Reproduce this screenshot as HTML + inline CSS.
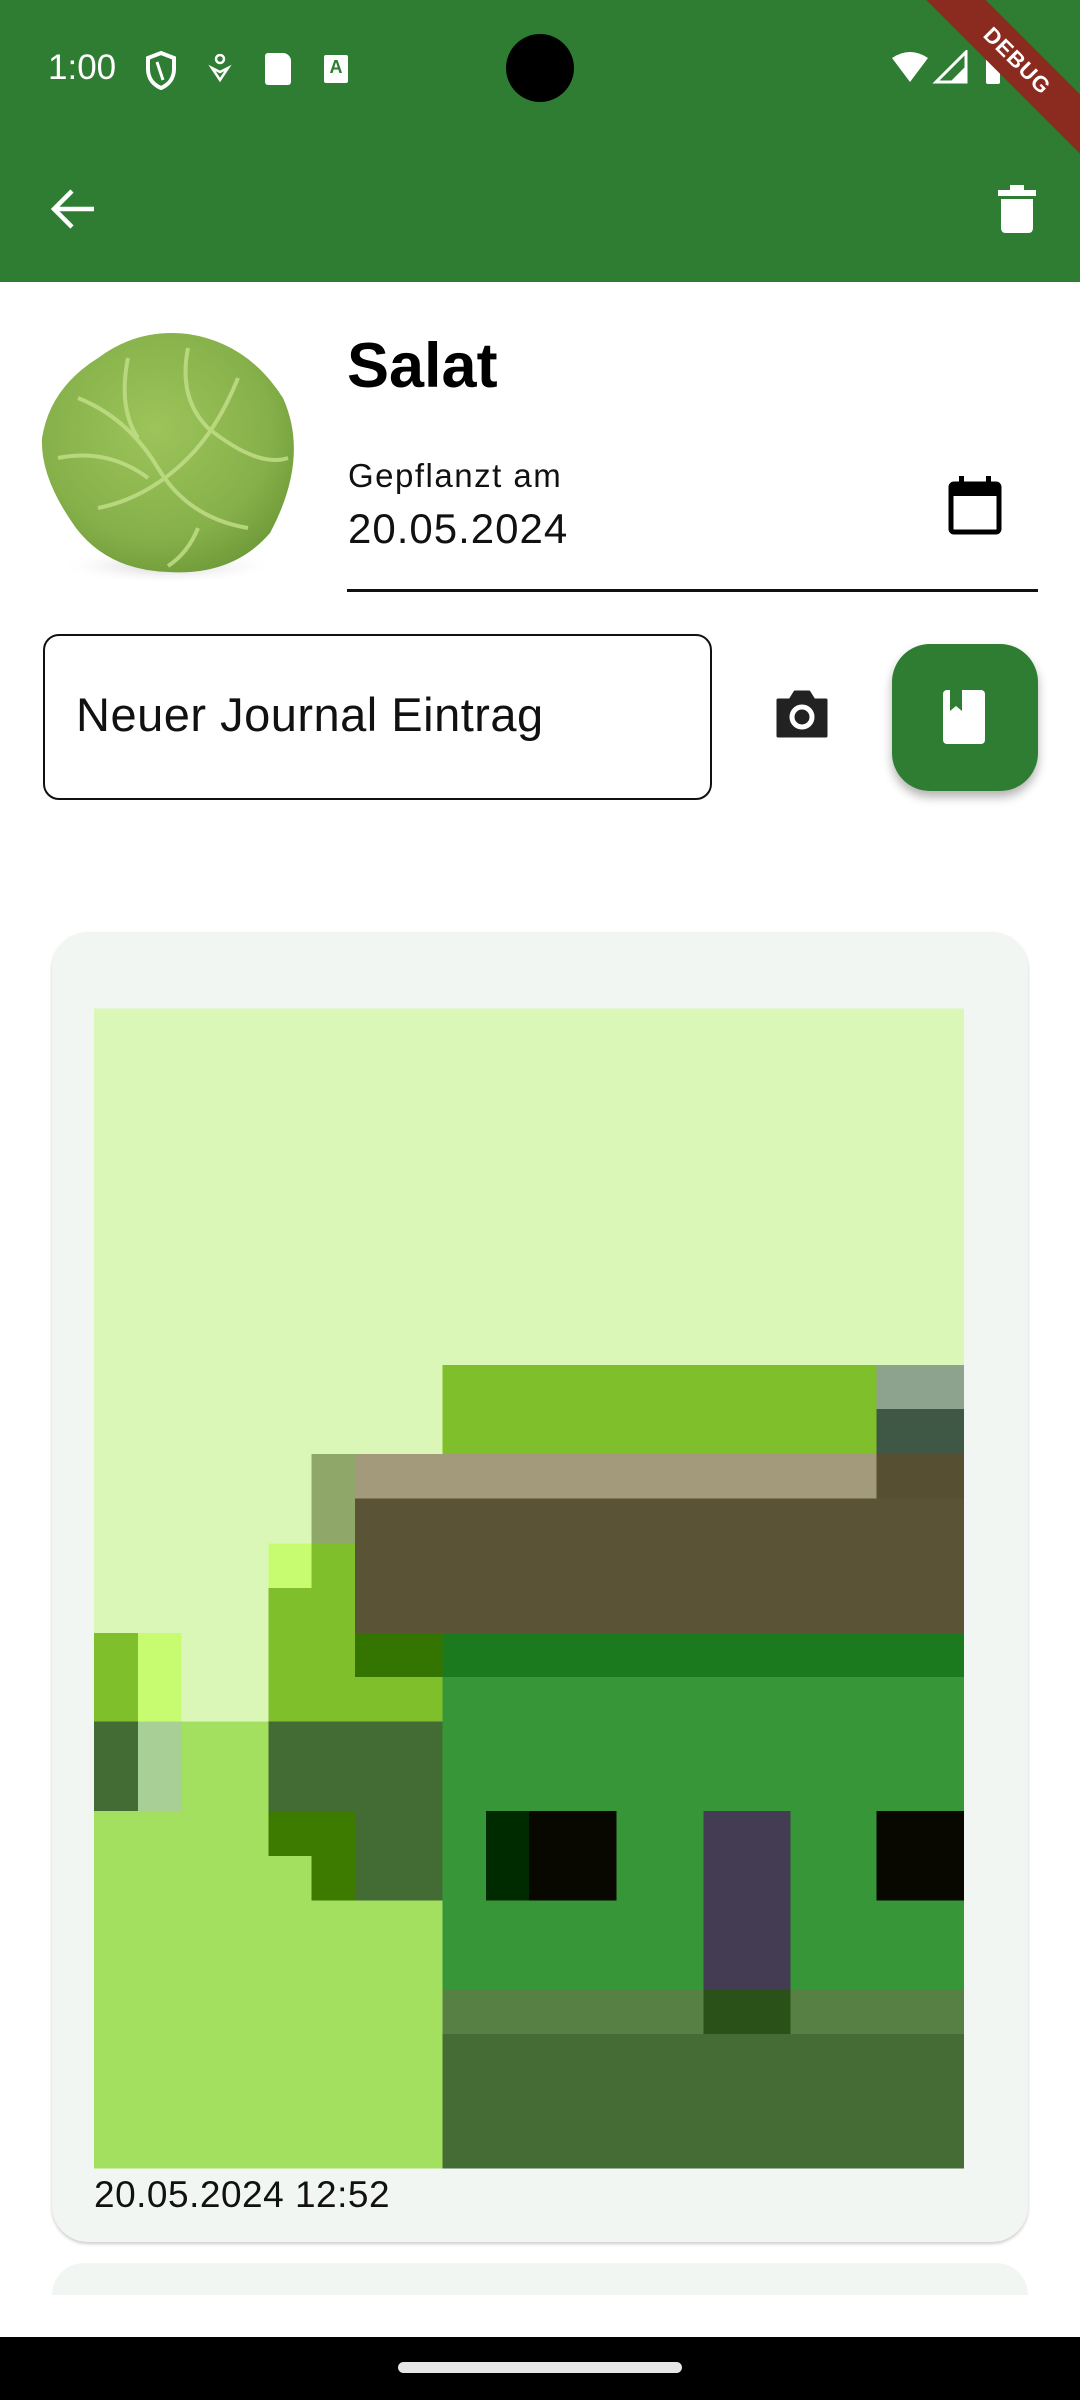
<!DOCTYPE html>
<html><head><meta charset="utf-8"><style>
*{margin:0;padding:0;box-sizing:border-box}
body{width:1080px;height:2400px;overflow:hidden;background:#fff;position:relative;font-family:"Liberation Sans",sans-serif}
.abs{position:absolute}
</style></head><body>
<div class="abs" style="left:0;top:0;width:1080px;height:282px;background:#2E7D32"></div>
<div class="abs" style="left:48px;top:48px;color:#fff;font-size:35px;">1:00</div>
<svg class="abs" style="left:144px;top:50px" width="34" height="40" viewBox="0 0 34 40"><path d="M17 3 L30 8 V19 C30 29 24 35 17 38 C10 35 4 29 4 19 V8 Z" fill="none" stroke="#fff" stroke-width="4"/><path d="M13 12 L19 30" stroke="#fff" stroke-width="3"/></svg>
<svg class="abs" style="left:208px;top:54px" width="24" height="30" viewBox="0 0 24 30"><circle cx="12" cy="5" r="4" fill="none" stroke="#fff" stroke-width="2.5"/><path d="M4 14 L12 26 L20 14 L12 18 Z" fill="none" stroke="#fff" stroke-width="2.5"/></svg>
<div class="abs" style="left:265px;top:53px;width:26px;height:32px;background:#fff;border-radius:3px 8px 3px 3px"></div>
<div class="abs" style="left:324px;top:55px;width:24px;height:28px;background:#fff;border-radius:2px;color:#2E7D32;font-size:18px;font-weight:bold;text-align:center;line-height:24px">A</div>
<div class="abs" style="left:506px;top:34px;width:68px;height:68px;border-radius:50%;background:#000"></div>
<svg class="abs" style="left:890px;top:50px" width="110" height="36" viewBox="0 0 110 36"><path d="M2 8 Q20 -4 38 8 L20 32 Z" fill="#fff"/><path d="M46 32 L76 32 L76 2 Z" fill="none" stroke="#fff" stroke-width="3"/><path d="M60 32 L76 32 L76 16 Z" fill="#fff"/><rect x="96" y="4" width="14" height="30" rx="2" fill="#fff"/></svg>
<div class="abs" style="left:887px;top:40px;width:260px;height:42px;background:#8B2A1E;transform:rotate(45deg);transform-origin:50% 50%;color:#fff;font-weight:bold;font-size:22px;text-align:center;line-height:42px;letter-spacing:1px">DEBUG</div>
<svg class="abs" style="left:48px;top:186px" width="50" height="46" viewBox="0 0 50 46"><path d="M46 23 H6 M24 5 L6 23 L24 41" fill="none" stroke="#fff" stroke-width="4.5"/></svg>
<svg class="abs" style="left:998px;top:184px" width="38" height="50" viewBox="0 0 38 50"><rect x="0" y="6" width="38" height="6" fill="#fff"/><rect x="12" y="1" width="14" height="6" fill="#fff"/><path d="M3 15 H35 V44 Q35 49 30 49 H8 Q3 49 3 44 Z" fill="#fff"/></svg>

<svg class="abs" style="left:38px;top:328px" width="270" height="255" viewBox="0 0 270 255" preserveAspectRatio="none">
<defs><radialGradient id="g" cx="0.45" cy="0.4" r="0.65"><stop offset="0" stop-color="#9CC45A"/><stop offset="0.7" stop-color="#86B04A"/><stop offset="1" stop-color="#6E9A38"/></radialGradient>
<radialGradient id="s" cx="0.5" cy="0.5" r="0.5"><stop offset="0" stop-color="#ccc"/><stop offset="1" stop-color="#fff" stop-opacity="0"/></radialGradient></defs>
<ellipse cx="130" cy="238" rx="110" ry="18" fill="url(#s)"/>
<path d="M60 30 Q100 0 150 6 Q210 15 245 70 Q272 130 232 205 Q195 248 130 244 Q70 242 38 200 Q2 150 4 110 Q12 60 60 30 Z" fill="url(#g)"/>
<g stroke="#C4E08A" stroke-width="4" fill="none" opacity="0.8">
<path d="M40 70 Q90 90 120 140 Q150 190 210 200"/><path d="M200 50 Q180 100 150 130 Q110 170 60 180"/><path d="M20 130 Q70 120 110 150"/><path d="M150 20 Q140 70 170 100 Q220 140 250 130"/><path d="M90 30 Q80 80 100 110"/><path d="M160 200 Q150 225 130 238"/></g>
</svg>

<div class="abs" style="left:347px;top:330px;font-size:63px;font-weight:bold;color:#000">Salat</div>
<div class="abs" style="left:348px;top:457px;font-size:33px;letter-spacing:1.5px;color:#111">Gepflanzt am</div>
<div class="abs" style="left:348px;top:505px;font-size:42px;letter-spacing:1px;color:#111">20.05.2024</div>
<svg class="abs" style="left:947px;top:474px" width="56" height="62" viewBox="0 0 56 62"><rect x="4" y="10" width="48" height="48" rx="3" fill="none" stroke="#000" stroke-width="5"/><rect x="4" y="10" width="48" height="12" fill="#000"/><rect x="12" y="2" width="5" height="12" fill="#000"/><rect x="39" y="2" width="5" height="12" fill="#000"/></svg>
<div class="abs" style="left:347px;top:589px;width:691px;height:3px;background:#111"></div>

<div class="abs" style="left:43px;top:634px;width:669px;height:166px;border:2px solid #111;border-radius:16px"></div>
<div class="abs" style="left:76px;top:687px;font-size:47px;letter-spacing:0.5px;color:#111">Neuer Journal Eintrag</div>
<svg class="abs" style="left:774px;top:688px" width="56" height="52" viewBox="0 0 56 52"><path d="M4 12 H16 L21 4 H35 L40 12 H52 V48 H4 Z" fill="#222" stroke="#222" stroke-width="3" stroke-linejoin="round"/><circle cx="28" cy="29" r="10" fill="none" stroke="#fff" stroke-width="5"/></svg>
<div class="abs" style="left:892px;top:644px;width:146px;height:147px;border-radius:38px;background:#2E7D32;box-shadow:0 6px 10px rgba(0,0,0,0.3)"></div>
<svg class="abs" style="left:942px;top:689px" width="44" height="56" viewBox="0 0 44 56"><rect x="1" y="1" width="42" height="54" rx="4" fill="#fff"/><path d="M8 1 V22 L14 17 L20 22 V1 Z" fill="#2E7D32"/></svg>

<div class="abs" style="left:52px;top:932px;width:976px;height:1310px;background:#F2F6F2;border-radius:36px;box-shadow:0 2px 3px rgba(0,0,0,0.2)"></div>
<svg class="abs" style="left:40px;top:900px" width="1000" height="1300" viewBox="0 0 1568 1568" preserveAspectRatio="none" shape-rendering="crispEdges">
<rect x="85" y="131" width="1364" height="1399" fill="#DBF7B8"/>
<rect x="631" y="561" width="681" height="107" fill="#7FBF2C"/>
<rect x="1312" y="561" width="137" height="53" fill="#8DA38D"/>
<rect x="1312" y="614" width="137" height="54" fill="#3E5845"/>
<rect x="426" y="668" width="68" height="108" fill="#8FA86A"/>
<rect x="494" y="668" width="818" height="54" fill="#A29A7A"/>
<rect x="1312" y="668" width="137" height="54" fill="#574F32"/>
<rect x="494" y="722" width="955" height="162" fill="#5A5335"/>
<rect x="358" y="776" width="68" height="54" fill="#C8FC70"/>
<rect x="426" y="776" width="68" height="108" fill="#7FBF2C"/>
<rect x="358" y="830" width="136" height="161" fill="#7FBF2C"/>
<rect x="494" y="937" width="137" height="54" fill="#7FBF2C"/>
<rect x="494" y="884" width="137" height="53" fill="#347400"/>
<rect x="631" y="884" width="818" height="53" fill="#1B7A1E"/>
<rect x="631" y="937" width="818" height="378" fill="#379637"/>
<rect x="85" y="884" width="69" height="107" fill="#7FBF2C"/>
<rect x="154" y="884" width="68" height="107" fill="#C8FC70"/>
<rect x="85" y="991" width="69" height="108" fill="#436C34"/>
<rect x="154" y="991" width="68" height="108" fill="#A8D096"/>
<rect x="222" y="991" width="136" height="108" fill="#A3E060"/>
<rect x="358" y="991" width="273" height="108" fill="#436C34"/>
<rect x="85" y="1099" width="546" height="431" fill="#A3E060"/>
<rect x="358" y="1099" width="136" height="54" fill="#3D7A00"/>
<rect x="426" y="1153" width="68" height="54" fill="#3D7A00"/>
<rect x="494" y="1099" width="137" height="108" fill="#436C34"/>
<rect x="699" y="1099" width="68" height="108" fill="#002A00"/>
<rect x="767" y="1099" width="137" height="108" fill="#080800"/>
<rect x="1040" y="1099" width="137" height="216" fill="#433C52"/>
<rect x="1312" y="1099" width="137" height="108" fill="#080800"/>
<rect x="631" y="1315" width="818" height="53" fill="#578045"/>
<rect x="1040" y="1315" width="137" height="53" fill="#2A5218"/>
<rect x="631" y="1368" width="818" height="162" fill="#456C34"/>
</svg>
<div class="abs" style="left:94px;top:2174px;font-size:37px;letter-spacing:0.5px;color:#111">20.05.2024 12:52</div>

<div class="abs" style="left:52px;top:2263px;width:976px;height:32px;background:#F2F6F2;border-radius:36px 36px 0 0"></div>
<div class="abs" style="left:0;top:2337px;width:1080px;height:63px;background:#000"></div>
<div class="abs" style="left:398px;top:2362px;width:284px;height:11px;background:#e6e6e6;border-radius:6px"></div>
</body></html>
